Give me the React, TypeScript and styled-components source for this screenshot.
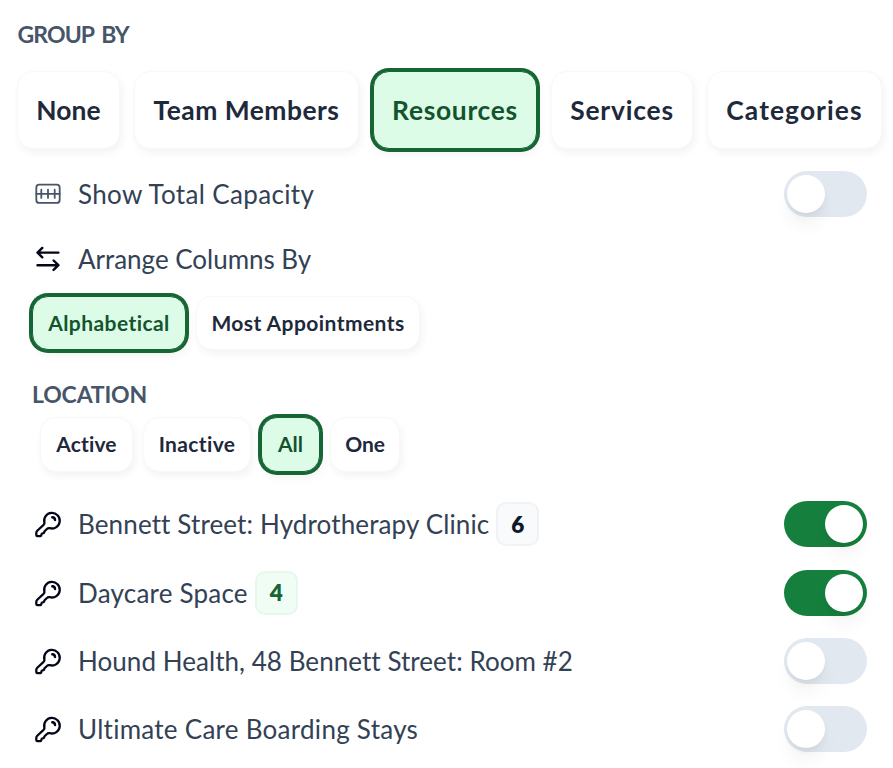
import React, { useState } from 'react';
import styled, { createGlobalStyle, css } from 'styled-components';

const GlobalStyle = createGlobalStyle`
  * { box-sizing: border-box; }
  html, body { margin: 0; background: #fff; overflow: hidden; }
  button { font: inherit; padding: 0; cursor: pointer; }
`;

const Panel = styled.main`
  width: 893px;
  height: 768px;
  padding-top: 19px;
  overflow: hidden;
  display: flex;
  flex-direction: column;
  background: #fff;
  font-family: Lato, 'Open Sans', sans-serif;
  font-variant-ligatures: none;
  white-space: nowrap;
`;

const Heading = styled.h2<{ $inset?: boolean; $tracking: number }>`
  flex: none;
  margin: ${p => (p.$inset ? '29px 0 8px 32px' : '0 0 22px 17.5px')};
  height: 30px;
  line-height: 30px;
  font-size: 23px;
  font-weight: 700;
  color: #475569;
  letter-spacing: ${p => p.$tracking}px;
  word-spacing: 3px;
`;

const ChipRow = styled.div<{ $indent: number; $gap: number }>`
  flex: none;
  display: flex;
  gap: ${p => p.$gap}px;
  padding-left: ${p => p.$indent}px;
`;

const Chip = styled.button<{ $active?: boolean; $large?: boolean; $width: number; $height: number; $tracking: number }>`
  flex: none;
  width: ${p => p.$width}px;
  height: ${p => p.$height}px;
  padding-bottom: ${p => (p.$large ? 0 : 2)}px;
  border: 1px solid #f8f8f9;
  border-radius: 16px;
  background: #fff;
  color: #1e293b;
  font-size: ${p => (p.$large ? 26.4 : 21)}px;
  font-weight: 700;
  letter-spacing: ${p => p.$tracking}px;
  box-shadow: 2px 4px 8px rgba(0, 0, 0, 0.05);
  ${p => p.$active && css`
    border-color: #166534;
    background: #dcfce7;
    color: #14532d;
    box-shadow: 0 0 0 3px #166534, 2px 6px 10px rgba(0, 0, 0, 0.05);
  `}
`;

const Row = styled.div<{ $height: number }>`
  flex: none;
  display: flex;
  align-items: center;
  height: ${p => p.$height}px;
  padding: 0 26.5px 0 33px;
`;

const OrderBlock = styled.div`
  flex: none;
  margin-top: 18px;
`;

const List = styled.section`
  flex: none;
  margin-top: 18px;
`;

const IconSlot = styled.span`
  flex: none;
  display: flex;
  width: 45px;
  color: #020617;
`;

const Label = styled.span<{ $tracking: number }>`
  font-size: 26px;
  line-height: 32px;
  color: #334155;
  letter-spacing: ${p => p.$tracking}px;
`;

const Badge = styled.span<{ $green?: boolean }>`
  display: flex;
  align-items: center;
  justify-content: center;
  width: 43px;
  height: 44px;
  margin-left: 7px;
  border: 2px solid ${p => (p.$green ? '#e4f9eb' : '#f0f2f5')};
  border-radius: 10px;
  background: ${p => (p.$green ? '#f0fdf4' : '#f8fafc')};
  color: ${p => (p.$green ? '#166534' : '#0f172a')};
  font-size: 22.5px;
  font-weight: 800;
`;

const Track = styled.button<{ $on: boolean }>`
  flex: none;
  display: flex;
  align-items: center;
  justify-content: ${p => (p.$on ? 'flex-end' : 'flex-start')};
  width: 83px;
  height: 46px;
  margin-left: auto;
  padding: 0 3.5px;
  border: 0;
  border-radius: 23px;
  background: ${p => (p.$on ? '#15803d' : '#e2e8f0')};
`;

const Knob = styled.span`
  width: 38px;
  height: 38px;
  border-radius: 50%;
  background: #fff;
  box-shadow: 0 14px 20px -3px rgba(0, 0, 0, 0.06), 0 4px 8px -3px rgba(0, 0, 0, 0.07);
`;

const CapacityIcon = () => (
  <svg width="30" height="30" viewBox="0 0 30 30" fill="none" stroke="#475569" strokeWidth="1.8" strokeLinecap="round">
    <rect x="3.3" y="5.7" width="23.4" height="18.2" rx="3" />
    <path d="M3.3 14.8H26.7M8.3 10.7V18.9M15 10.7V18.9M21.7 10.7V18.9" />
  </svg>
);

const ArrowsIcon = () => (
  <svg width="30" height="30" viewBox="0 0 30 30" fill="none" stroke="currentColor" strokeWidth="2.4" strokeLinecap="round" strokeLinejoin="round">
    <path d="M25.4 8.6H4.5M9.3 3.9L4.5 8.6L9.3 13.3M4.5 21.2H25.4M20.6 16.5L25.4 21.2L20.6 25.9" />
  </svg>
);

const KeyIcon = () => (
  <svg width="30" height="30" viewBox="0 0 30 30" fill="none" stroke="currentColor" strokeWidth="2.3" strokeLinecap="round" strokeLinejoin="round">
    <path d="M11.4 13.6A7.8 7.8 0 1 1 16.9 19.2C15.7 18.9 14.7 19.2 13.9 20L11.6 22.3C11.1 22.8 11.3 23.9 10.4 24.2L9 24.5C8.2 24.7 8.6 26.2 7.9 26.9C7.2 27.4 5.2 27.2 4.1 27.1C3.5 27 3.3 26.5 3.3 26V24C3.3 22.9 3.8 22.2 4.5 21.5L10.6 15.8C11.2 15.2 11.6 14.5 11.4 13.6Z" />
    <path d="M19.3 8.3C20.7 8.4 21.9 9.6 22 11" strokeWidth="2.5" />
  </svg>
);

function Toggle({ label, initial = false }: { label: string; initial?: boolean }) {
  const [on, setOn] = useState(initial);
  return (
    <Track role="switch" aria-checked={on} aria-label={label} $on={on} onClick={() => setOn(!on)}>
      <Knob />
    </Track>
  );
}

type Option = { name: string; width: number; tracking: number };

const groups: Option[] = [
  { name: 'None', width: 103, tracking: 0.1 },
  { name: 'Team Members', width: 225, tracking: 0.5 },
  { name: 'Resources', width: 164, tracking: 0.7 },
  { name: 'Services', width: 142, tracking: 0.8 },
  { name: 'Categories', width: 175, tracking: 1.08 },
];
const orders: Option[] = [
  { name: 'Alphabetical', width: 154, tracking: 0.43 },
  { name: 'Most Appointments', width: 224, tracking: 0.43 },
];
const statuses: Option[] = [
  { name: 'Active', width: 93, tracking: 0.15 },
  { name: 'Inactive', width: 108, tracking: 0.35 },
  { name: 'All', width: 59, tracking: 0 },
  { name: 'One', width: 70, tracking: -0.1 },
];
const resources = [
  { name: 'Bennett Street: Hydrotherapy Clinic', tracking: 0.13, count: 6, on: true },
  { name: 'Daycare Space', tracking: 0.22, count: 4, green: true, on: true },
  { name: 'Hound Health, 48 Bennett Street: Room #2', tracking: 0.05 },
  { name: 'Ultimate Care Boarding Stays', tracking: 0.27 },
];

function Chips({ options, initial, indent, gap, height, large }: {
  options: Option[]; initial: string; indent: number; gap: number; height: number; large?: boolean;
}) {
  const [selected, setSelected] = useState(initial);
  return (
    <ChipRow $indent={indent} $gap={gap}>
      {options.map(o => (
        <Chip key={o.name} $active={o.name === selected} $large={large} $width={o.width} $height={height}
          $tracking={o.tracking} onClick={() => setSelected(o.name)}>
          {o.name}
        </Chip>
      ))}
    </ChipRow>
  );
}

export default function App() {
  return (
    <>
      <GlobalStyle />
      <Panel>
        <Heading $tracking={-0.9}>GROUP BY</Heading>
        <Chips options={groups} initial="Resources" indent={17} gap={14} height={78} large />
        <Row $height={90}>
          <IconSlot><CapacityIcon /></IconSlot>
          <Label $tracking={0.35}>Show Total Capacity</Label>
          <Toggle label="Show Total Capacity" />
        </Row>
        <Row $height={39}>
          <IconSlot><ArrowsIcon /></IconSlot>
          <Label $tracking={-0.02}>Arrange Columns By</Label>
        </Row>
        <OrderBlock>
          <Chips options={orders} initial="Alphabetical" indent={32} gap={10} height={54} />
        </OrderBlock>
        <Heading $inset $tracking={-0.17}>LOCATION</Heading>
        <Chips options={statuses} initial="All" indent={40} gap={10} height={55} />
        <List>
          {resources.map(r => (
            <Row key={r.name} $height={68.4}>
              <IconSlot><KeyIcon /></IconSlot>
              <Label $tracking={r.tracking}>{r.name}</Label>
              {r.count && <Badge $green={r.green}>{r.count}</Badge>}
              <Toggle label={r.name} initial={r.on} />
            </Row>
          ))}
        </List>
      </Panel>
    </>
  );
}
